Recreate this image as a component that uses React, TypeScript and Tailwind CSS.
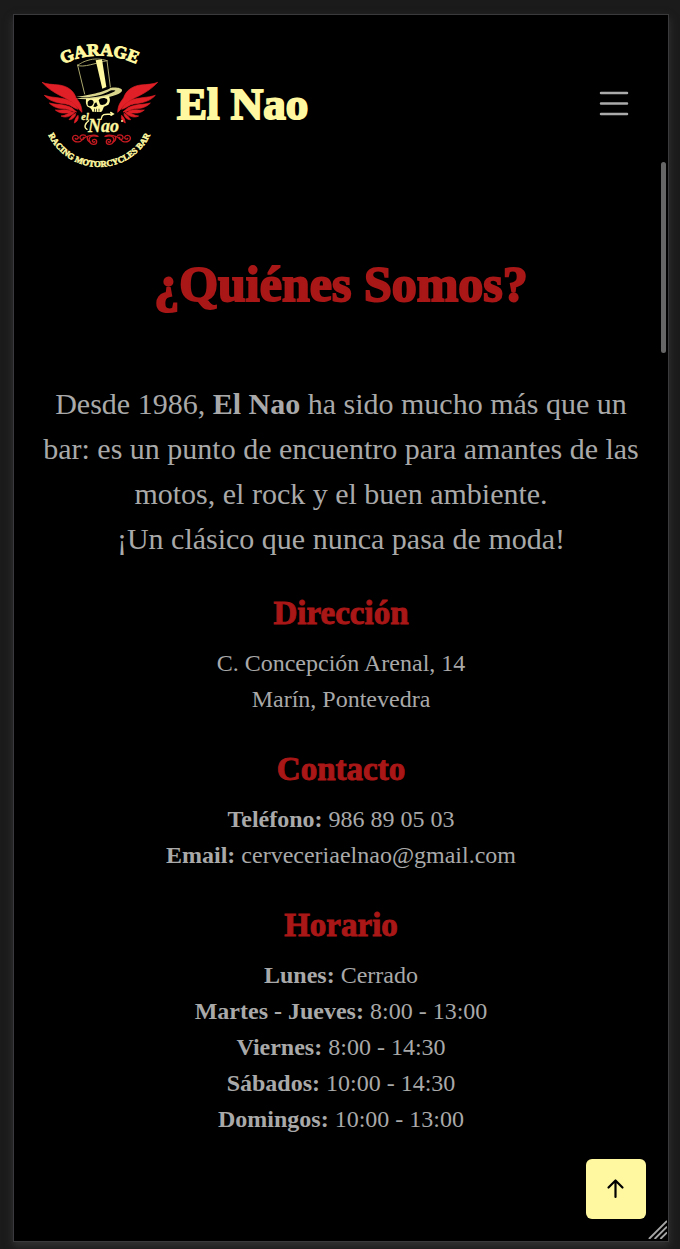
import React from "react";

const CREAM = "#fff8a0";
const RED = "#e01f26";

function Logo() {
  return (
    <svg viewBox="0 0 420 450" className="h-[150px] w-[140px] shrink-0" role="img" aria-label="Garage El Nao, Racing Motorcycles Bar">
      <defs>
        <path id="arc-top" d="M98 106 Q208 54 320 105" />
        <path id="arc-bottom" d="M55 318 A170 170 0 0 0 361 318" />
        <g id="wing">
          <path d="M36 160 C50 166 66 166 88 168 C116 172 132 188 138 206 C146 218 155 226 156 250 C148 244 143 234 132 224 C112 206 68 196 36 160Z" />
          <path d="M43 199 C64 207 94 204 116 214 C129 220 139 230 144 241 C132 238 123 228 108 225 C80 222 58 216 43 199Z" />
          <path d="M58 222 C80 228 104 224 126 237 L140 249 C128 249 118 241 106 239 C88 240 70 235 58 222Z" />
          <path d="M76 243 C92 245 104 239 120 245 L128 251 C110 251 92 257 76 243Z" />
          <path d="M93 261 C108 260 116 249 134 250 C126 260 108 269 93 261Z" />
          <path d="M117 272 C124 264 127 257 137 253 C138 262 128 273 117 272Z" />
          <path d="M133 282 C134 273 137 266 144 259 C147 270 141 279 133 282Z" />
        </g>
        <g id="curls">
          <path d="M204 322 C190 314 182 321 172 322 C161 323 160 333 151 337 C137 342 126 334 128 325 C130 317 143 317 145 325 C145 331 138 332 136 328" />
          <path d="M166 319 C153 315 147 323 151 329 C155 334 164 330 160 325" />
          <path d="M202 322 C180 317 174 328 179 338 C184 349 200 348 200 338 C200 329 187 329 187 336 C188 340 192 341 194 338" />
          <path d="M172 323 C171 332 173 337 180 339" />
        </g>
      </defs>

      <g fill={CREAM} stroke={CREAM} fontFamily="'Liberation Serif', serif" fontWeight="bold">
        <text fontSize="52" strokeWidth="3"><textPath href="#arc-top" startOffset="50%" textAnchor="middle">GARAGE</textPath></text>
        <text fontSize="26" strokeWidth="1.5"><textPath href="#arc-bottom" startOffset="50%" textAnchor="middle">RACING MOTORCYCLES BAR</textPath></text>
      </g>

      <g fill={RED} stroke={RED} strokeWidth="2">
        <use href="#wing" />
        <use href="#wing" transform="translate(419 0) scale(-1 1)" />
      </g>
      <g fill="none" stroke="#c51a20" strokeWidth="4" strokeLinecap="round">
        <use href="#curls" />
        <use href="#curls" transform="translate(429 0) scale(-1 1)" />
      </g>

      <g fill="none" stroke="#aaa66c" strokeWidth="3" strokeLinecap="round" strokeLinejoin="round">
        <path d="M143 108 C150 106 155 99 174 94 C190 88 215 89 231 95" />
        <path d="M143 109 C157 118 204 100 231 95" />
        <path d="M143 109 L164 195" />
        <path d="M231 95 L241 174" />
      </g>
      <g fill={CREAM}>
        <path d="M197 94 L216 91 L229 174 L217 179Z" />
        <path d="M138 203 C170 201 225 188 241 177 C257 174 274 177 276 183 C277 191 262 198 240 203 C211 211 175 211 138 210 L154 206 C197 207 229 199 252 188 C263 183 247 183 240 185 C219 198 186 204 166 205Z" fill="#d8d48c" />
        <path d="M168 209 C183 208 192 209 205 207 L236 201 C242 211 240 220 235 227 L222 233 C217 241 219 249 209 249 L187 248 C185 239 181 236 173 233 C166 224 168 217 168 209Z" />
      </g>
      <g fill="#000">
        <path d="M173 219 C179 210 188 211 191 219 C190 232 178 235 173 228Z" />
        <path d="M206 214 C211 206 226 205 232 212 C234 224 218 231 210 226Z" />
        <path d="M194 223 L199 220 L203 230 L196 234 L190 233Z" />
        <path d="M192 239 H194 V248 H192Z M199 239 H201 V249 H199Z M206 239 H208 V248 H206Z" />
      </g>
      <g fill={CREAM} stroke={CREAM} strokeWidth="1" fontFamily="'Liberation Serif', serif" fontWeight="bold" fontStyle="italic">
        <text x="154" y="273" fontSize="31">el</text>
        <text x="174" y="308" fontSize="54">Nao</text>
      </g>
      <g fill="none" stroke={CREAM} strokeWidth="4" strokeLinecap="round">
        <path d="M176 275 C164 284 161 296 171 301" />
        <path d="M214 268 C217 250 233 258 248 255 M242 250 L250 255 L243 259" />
      </g>
      <circle cx="276" cy="276" r="3" fill={CREAM} />
    </svg>
  );
}

function Section({ title, children }: { title: string; children: React.ReactNode }) {
  return (
    <section className="mt-8 text-2xl leading-9">
      <h2 className="mb-3 text-[33px] leading-10 font-bold text-[#a91717] [-webkit-text-stroke:1px_#a91717]">{title}</h2>
      {children}
    </section>
  );
}

const hours = [
  ["Lunes", "Cerrado"],
  ["Martes - Jueves", "8:00 - 13:00"],
  ["Viernes", "8:00 - 14:30"],
  ["Sábados", "10:00 - 14:30"],
  ["Domingos", "10:00 - 13:00"],
];

export default function App() {
  return (
    <div className="flex min-h-screen bg-[#1b1b1c] pt-3.5 pr-[11px] pb-[7px] pl-[13px] font-['Liberation_Serif',serif] text-[#a9a9a9]">
      <div className="relative min-w-0 flex-1 border border-[#3a3a3c] bg-black shadow-[0_4px_8px_#343434]">
        <header className="flex h-[178px] items-center justify-between pr-[39px] pl-4">
          <a href="#inicio" className="flex items-center gap-[7px] text-[45px] leading-none font-bold text-[#fff8a0] [-webkit-text-stroke:2px_#fff8a0]">
            <Logo />
            <span>El Nao</span>
          </a>
          <button type="button" aria-label="Abrir menú" className="flex h-8 w-[30px] items-center">
            <svg viewBox="0 0 30 32" className="h-8 w-[30px]" fill="none" stroke="#aaaaaa" strokeWidth="2.5" strokeLinecap="round">
              <path d="M2 5H28M2 15.5H28M2 26H28" />
            </svg>
          </button>
        </header>

        <main className="px-6 pt-[61px] pb-24 text-center">
          <h1 className="mb-[67px] text-[50px] leading-[60px] font-bold text-[#a91717] [-webkit-text-stroke:2px_#a91717]">¿Quiénes Somos?</h1>
          <p className="text-[30px] leading-[45px]">
            Desde 1986, <strong>El Nao</strong> ha sido mucho más que un bar: es un punto de encuentro para amantes de las motos, el rock y el buen ambiente.
            <br />
            ¡Un clásico que nunca pasa de moda!
          </p>
          <Section title="Dirección">
            <p>C. Concepción Arenal, 14</p>
            <p>Marín, Pontevedra</p>
          </Section>
          <Section title="Contacto">
            <p><strong>Teléfono:</strong> 986 89 05 03</p>
            <p><strong>Email:</strong> cerveceriaelnao@gmail.com</p>
          </Section>
          <Section title="Horario">
            <ul>
              {hours.map(([day, time]) => (
                <li key={day}><strong>{day}:</strong> {time}</li>
              ))}
            </ul>
          </Section>
        </main>

        <div className="absolute top-[147px] right-0.5 h-[191px] w-[5px] rounded-full bg-[#666666]" />
        <button type="button" aria-label="Volver arriba" className="absolute right-[22px] bottom-[22px] flex size-[60px] items-center justify-center rounded-md bg-[#fff8a0] text-black">
          <svg viewBox="0 0 20 22" className="h-[22px] w-5" fill="none" stroke="currentColor" strokeWidth="2.2" strokeLinecap="round" strokeLinejoin="round">
            <path d="M9.5 19V3M2.5 9.5L9.5 2.5L16.5 9.5" />
          </svg>
        </button>
        <svg viewBox="0 0 20 20" className="absolute right-px bottom-0.5 size-[19px]" fill="none" stroke="#a5a5a5" strokeWidth="2" aria-hidden="true">
          <path d="M1 20L20 1M7 20L20 7M13 20L20 13" />
        </svg>
      </div>
    </div>
  );
}
